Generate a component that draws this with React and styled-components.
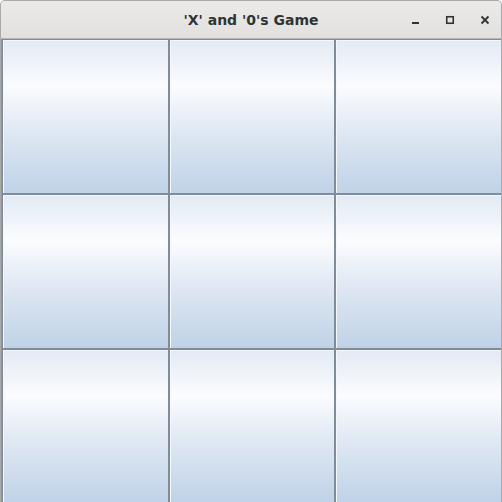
import React from 'react';
import styled, { createGlobalStyle } from 'styled-components';

const Global = createGlobalStyle`
    html, body {
        margin: 0;
        padding: 0;
        background: #ffffff;
    }
`;

const Window = styled.div`
    width: 502px;
    height: 502px;
    display: flex;
    flex-direction: column;
    background: #d9d9d9;
    border-radius: 5px 5px 0 0;
    overflow: hidden;
    box-sizing: border-box;
    border: 1px solid #a9a9a9;
    border-bottom: none;
`;

const TitleBar = styled.div`
    height: 37px;
    flex: none;
    display: flex;
    align-items: center;
    position: relative;
    background: linear-gradient(#ebeae9, #e2e1df);
    border-bottom: 1px solid #b8b6b3;
`;

const Title = styled.div`
    flex: 1;
    text-align: center;
    font-family: "DejaVu Sans", sans-serif;
    font-weight: bold;
    font-size: 14px;
    color: #2e3436;
`;

const Controls = styled.div`
    position: absolute;
    right: 8px;
    top: 0;
    height: 37px;
    display: flex;
    align-items: center;
    gap: 18px;
`;

const CtrlBtn = styled.div`
    width: 17px;
    height: 17px;
    display: flex;
    align-items: center;
    justify-content: center;
    color: #2e3436;
`;

const Board = styled.div`
    flex: 1;
    display: grid;
    grid-template-columns: 167px 166px 167px;
    grid-template-rows: 155px 155px 154px;
    background: #8c96a0;
    padding-left: 1px;
`;

const Cell = styled.button`
    margin: 0;
    padding: 0;
    border: 1px solid #808c98;
    box-shadow: inset 1px 1px 0 #f4f7fb;
    background: linear-gradient(
        to bottom,
        #e2eaf4 0%,
        #fbfcfe 30%,
        #dfe8f3 60%,
        #bfd2e7 100%
    );
    cursor: pointer;
`;

const App = () => {
    const cells = Array.from({ length: 9 });
    return (
        <>
            <Global />
            <Window>
                <TitleBar>
                    <Title>'X' and '0's Game</Title>
                    <Controls>
                        <CtrlBtn>
                            <svg width="10" height="10" viewBox="0 0 10 10">
                                <rect x="2" y="7" width="7" height="2" fill="currentColor" />
                            </svg>
                        </CtrlBtn>
                        <CtrlBtn>
                            <svg width="10" height="10" viewBox="0 0 10 10">
                                <rect x="1.75" y="1.75" width="6.5" height="6.5" fill="none" stroke="currentColor" strokeWidth="1.6" />
                            </svg>
                        </CtrlBtn>
                        <CtrlBtn>
                            <svg width="10" height="10" viewBox="0 0 10 10">
                                <path d="M1.5 1.5 L8.5 8.5 M8.5 1.5 L1.5 8.5" stroke="currentColor" strokeWidth="1.8" />
                            </svg>
                        </CtrlBtn>
                    </Controls>
                </TitleBar>
                <Board>
                    {cells.map((_, i) => (
                        <Cell key={i} />
                    ))}
                </Board>
            </Window>
        </>
    );
};

export default App;
